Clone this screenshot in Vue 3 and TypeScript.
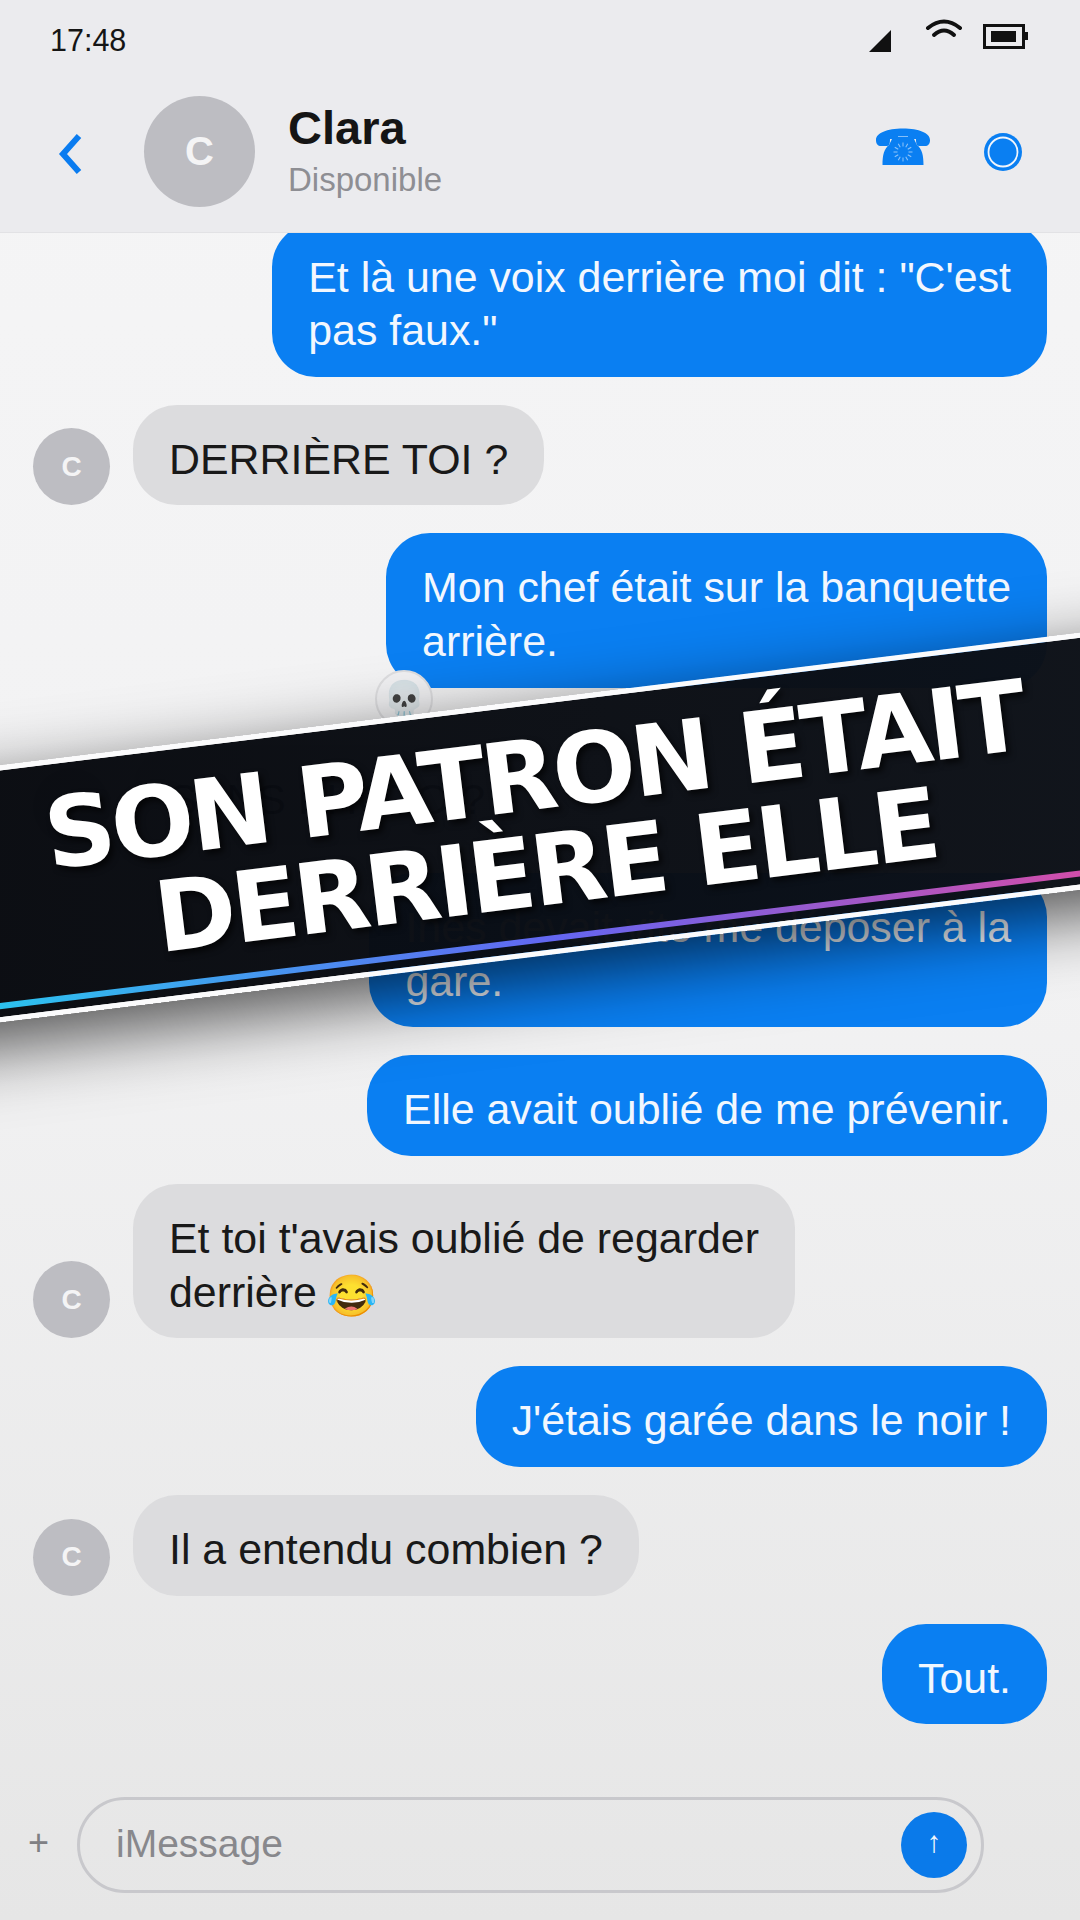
<script setup lang="ts">
interface Msg {
  id: number
  from: 'me' | 'them'
  lines: string[]
  emoji?: string
  reaction?: string
}

const messages: Msg[] = [
  { id: 1, from: 'me', lines: ['Et là une voix derrière moi dit : "C\'est', 'pas faux."'] },
  { id: 2, from: 'them', lines: ['DERRIÈRE TOI ?'] },
  { id: 3, from: 'me', lines: ['Mon chef était sur la banquette', 'arrière.'], reaction: '💀' },
  { id: 4, from: 'them', lines: ['SANS PHOTO ?'] },
  { id: 5, from: 'me', lines: ['Ines devait vite me déposer à la', 'gare.'] },
  { id: 6, from: 'me', lines: ['Elle avait oublié de me prévenir.'] },
  { id: 7, from: 'them', lines: ["Et toi t'avais oublié de regarder", 'derrière'], emoji: '😂' },
  { id: 8, from: 'me', lines: ["J'étais garée dans le noir !"] },
  { id: 9, from: 'them', lines: ['Il a entendu combien ?'] },
  { id: 10, from: 'me', lines: ['Tout.'] },
]

const dialAngles: number[] = Array.from({ length: 12 }, (_, i) => i * 30)
</script>

<template>
  <div class="phone">
    <header class="top">
      <div class="status">
        <span class="time">17:48</span>
        <svg class="status-icons" width="160" height="40" viewBox="0 0 160 40">
          <path d="M1 34 L23 12 L23 34 Z" fill="#111" />
          <path d="M60 10 Q76 -3 92 10" fill="none" stroke="#111" stroke-width="4" stroke-linecap="round" />
          <path d="M66 17 Q76 8 86 17" fill="none" stroke="#111" stroke-width="4" stroke-linecap="round" />
          <rect x="116.500" y="7.500" width="39" height="22" fill="none" stroke="#111" stroke-width="3" />
          <rect x="123" y="13" width="25" height="11" fill="#111" />
          <rect x="156" y="14" width="4" height="8" fill="#111" />
        </svg>
      </div>
      <div class="contact">
        <svg class="back" width="28" height="42" viewBox="0 0 28 42">
          <path d="M23 3 L7 21 L23 39" fill="none" stroke="#0a7cf0" stroke-width="6" />
        </svg>
        <div class="avatar big">C</div>
        <div class="who">
          <div class="name">Clara</div>
          <div class="state">Disponible</div>
        </div>
        <svg class="call" width="56" height="40" viewBox="0 0 56 40">
          <path
            d="M1 13 C1 6 12 1.500 28 1.500 C44 1.500 55 6 55 13 C55 17 53 19 50 19 L44 19 C41.500 19 41 16 41 12 L15 12 C15 16 14.500 19 12 19 L6 19 C3 19 1 17 1 13 Z"
            fill="#0a7ff2"
          />
          <path d="M17 12 L39 12 L42 18 C47 22 48.500 28 48.500 38 L7.500 38 C7.500 28 9 22 14 18 Z" fill="#0a7ff2" />
          <path d="M23 9.500 L33 9.500" stroke="#ffffff" stroke-opacity="0.5" stroke-width="1" />
          <g stroke="#ffffff" stroke-opacity="0.55" stroke-width="1">
            <line
              v-for="a in dialAngles"
              :key="a"
              x1="28"
              y1="15.500"
              x2="28"
              y2="19.500"
              :transform="`rotate(${a} 28 25)`"
            />
          </g>
        </svg>
        <svg class="video" width="40" height="40" viewBox="0 0 40 40">
          <circle cx="20" cy="20" r="19" fill="#0a7ff2" />
          <circle cx="20" cy="20" r="14.500" fill="#0a7ff2" stroke="#f1f5fb" stroke-width="1.800" />
        </svg>
      </div>
    </header>

    <main class="thread">
      <div v-for="m in messages" :key="m.id" class="row" :class="m.from">
        <div v-if="m.from === 'them'" class="avatar small">C</div>
        <div class="bubble" :class="{ reacted: m.reaction }">
          <div v-for="(line, i) in m.lines" :key="i" class="line">
            <span>{{ line }}</span>
            <span v-if="m.emoji && i === m.lines.length - 1" class="emoji">{{ m.emoji }}</span>
          </div>
          <span v-if="m.reaction" class="reaction">{{ m.reaction }}</span>
        </div>
      </div>
    </main>

    <footer class="composer">
      <span class="plus">+</span>
      <div class="field">
        <span class="placeholder">iMessage</span>
        <span class="send">↑</span>
      </div>
    </footer>

    <div class="banner">
      <div class="headline">SON PATRON ÉTAIT<br />DERRIÈRE ELLE</div>
    </div>
  </div>
</template>

<style scoped>
.phone {
  position: relative;
  width: 1080px;
  height: 1920px;
  overflow: hidden;
  display: flex;
  flex-direction: column;
  background: linear-gradient(180deg, #f5f5f6 0%, #f2f2f3 50%, #e6e6e6 100%);
  font-family: "Liberation Sans", Arial, sans-serif;
  color: #151515;
}
.top {
  position: relative;
  z-index: 2;
  height: 233px;
  box-sizing: border-box;
  background: #ebebee;
  border-bottom: 1px solid #e2e2e5;
  padding: 0 32px 0 50px;
  flex: none;
}
.status {
  height: 80px;
  display: flex;
  align-items: center;
  justify-content: space-between;
}
.time {
  font-size: 30.500px;
}
.status-icons {
  margin: -4px 20px 0 0;
}
.contact {
  display: flex;
  align-items: center;
  height: 142px;
}
.back {
  margin: 6px 0 0 6px;
  flex: none;
}
.avatar {
  display: flex;
  align-items: center;
  justify-content: center;
  border-radius: 50%;
  background: #bdbdc2;
  color: #f4f4f5;
  font-weight: 700;
  flex: none;
}
.avatar.big {
  width: 111px;
  height: 111px;
  font-size: 40px;
  margin-left: 60px;
}
.who {
  margin-left: 33px;
  flex: 1;
}
.name {
  font-size: 47px;
  font-weight: 700;
  line-height: 58px;
}
.state {
  font-size: 33px;
  line-height: 46px;
  color: #8e8e93;
}
.call {
  flex: none;
  margin-bottom: 8px;
}
.video {
  flex: none;
  margin: 2px 25px 0 52px;
}
.thread {
  flex: 1;
  margin-top: -10.500px;
  padding: 0 33px;
  display: flex;
  flex-direction: column;
  gap: 28px;
}
.row {
  display: flex;
  align-items: flex-end;
  flex: none;
}
.row.me {
  justify-content: flex-end;
}
.avatar.small {
  width: 77px;
  height: 77px;
  font-size: 28px;
  margin-right: 23px;
}
.bubble {
  position: relative;
  box-sizing: border-box;
  padding: 28px 36px 19.200px;
  font-size: 42.900px;
  line-height: 53.500px;
  border-radius: 44px;
}
.line {
  white-space: nowrap;
}
.emoji {
  position: relative;
  top: 3px;
  margin-left: 9px;
  font-size: 41px;
  line-height: 1;
}
.me .bubble {
  background: #0a7ff2;
  color: #f2f7fe;
}
.them .bubble {
  background: #dcdcde;
  color: #191919;
}
.reacted {
  margin-bottom: 29px;
}
.reaction {
  position: absolute;
  left: -11px;
  bottom: -40px;
  width: 58px;
  height: 58px;
  box-sizing: border-box;
  display: flex;
  align-items: center;
  justify-content: center;
  border-radius: 50%;
  background: #f1f1f3;
  border: 2px solid #dedee0;
  font-size: 34px;
}
.composer {
  flex: none;
  display: flex;
  align-items: center;
  height: 160px;
  padding: 9px 96px 0 28px;
  box-sizing: border-box;
}
.plus {
  width: 49px;
  font-size: 36px;
  color: #808084;
  padding-bottom: 4px;
}
.field {
  flex: 1;
  height: 96px;
  box-sizing: border-box;
  border: 3px solid #c8c8cc;
  border-radius: 48px;
  display: flex;
  align-items: center;
  justify-content: space-between;
  padding: 0 14px 0 36px;
}
.placeholder {
  font-size: 39px;
  color: #88888c;
  padding-bottom: 2px;
}
.send {
  width: 66px;
  height: 66px;
  box-sizing: border-box;
  padding-bottom: 6px;
  border-radius: 50%;
  background: #0a7aea;
  color: #f2f6fc;
  display: flex;
  align-items: center;
  justify-content: center;
  font-size: 30px;
}
.banner {
  position: absolute;
  z-index: 3;
  left: -120px;
  top: 700px;
  width: 1320px;
  height: 255px;
  box-sizing: border-box;
  transform: rotate(-7deg);
  border-top: 5px solid #fbfbfc;
  border-bottom: 5px solid #fbfbfc;
  background: linear-gradient(90deg, rgba(7, 9, 14, 0.98), rgba(13, 17, 24, 0.98));
  box-shadow: 0 22px 70px rgba(0, 0, 0, 0.68);
  display: flex;
  align-items: center;
  justify-content: center;
}
.banner::after {
  content: "";
  position: absolute;
  left: 0;
  right: 0;
  bottom: 8px;
  height: 6px;
  background: linear-gradient(90deg, #22d3ee, #6366f1 50%, #ec4899);
}
.headline {
  color: #fff;
  font-family: "DejaVu Sans", sans-serif;
  font-weight: 700;
  font-size: 98px;
  letter-spacing: -4px;
  line-height: 96px;
  text-align: center;
  text-shadow: 3px 4px 6px rgba(0, 0, 0, 0.7);
  margin-bottom: 10px;
}
</style>

<style>
html,
body {
  margin: 0;
  background: #f2f2f3;
}
</style>
